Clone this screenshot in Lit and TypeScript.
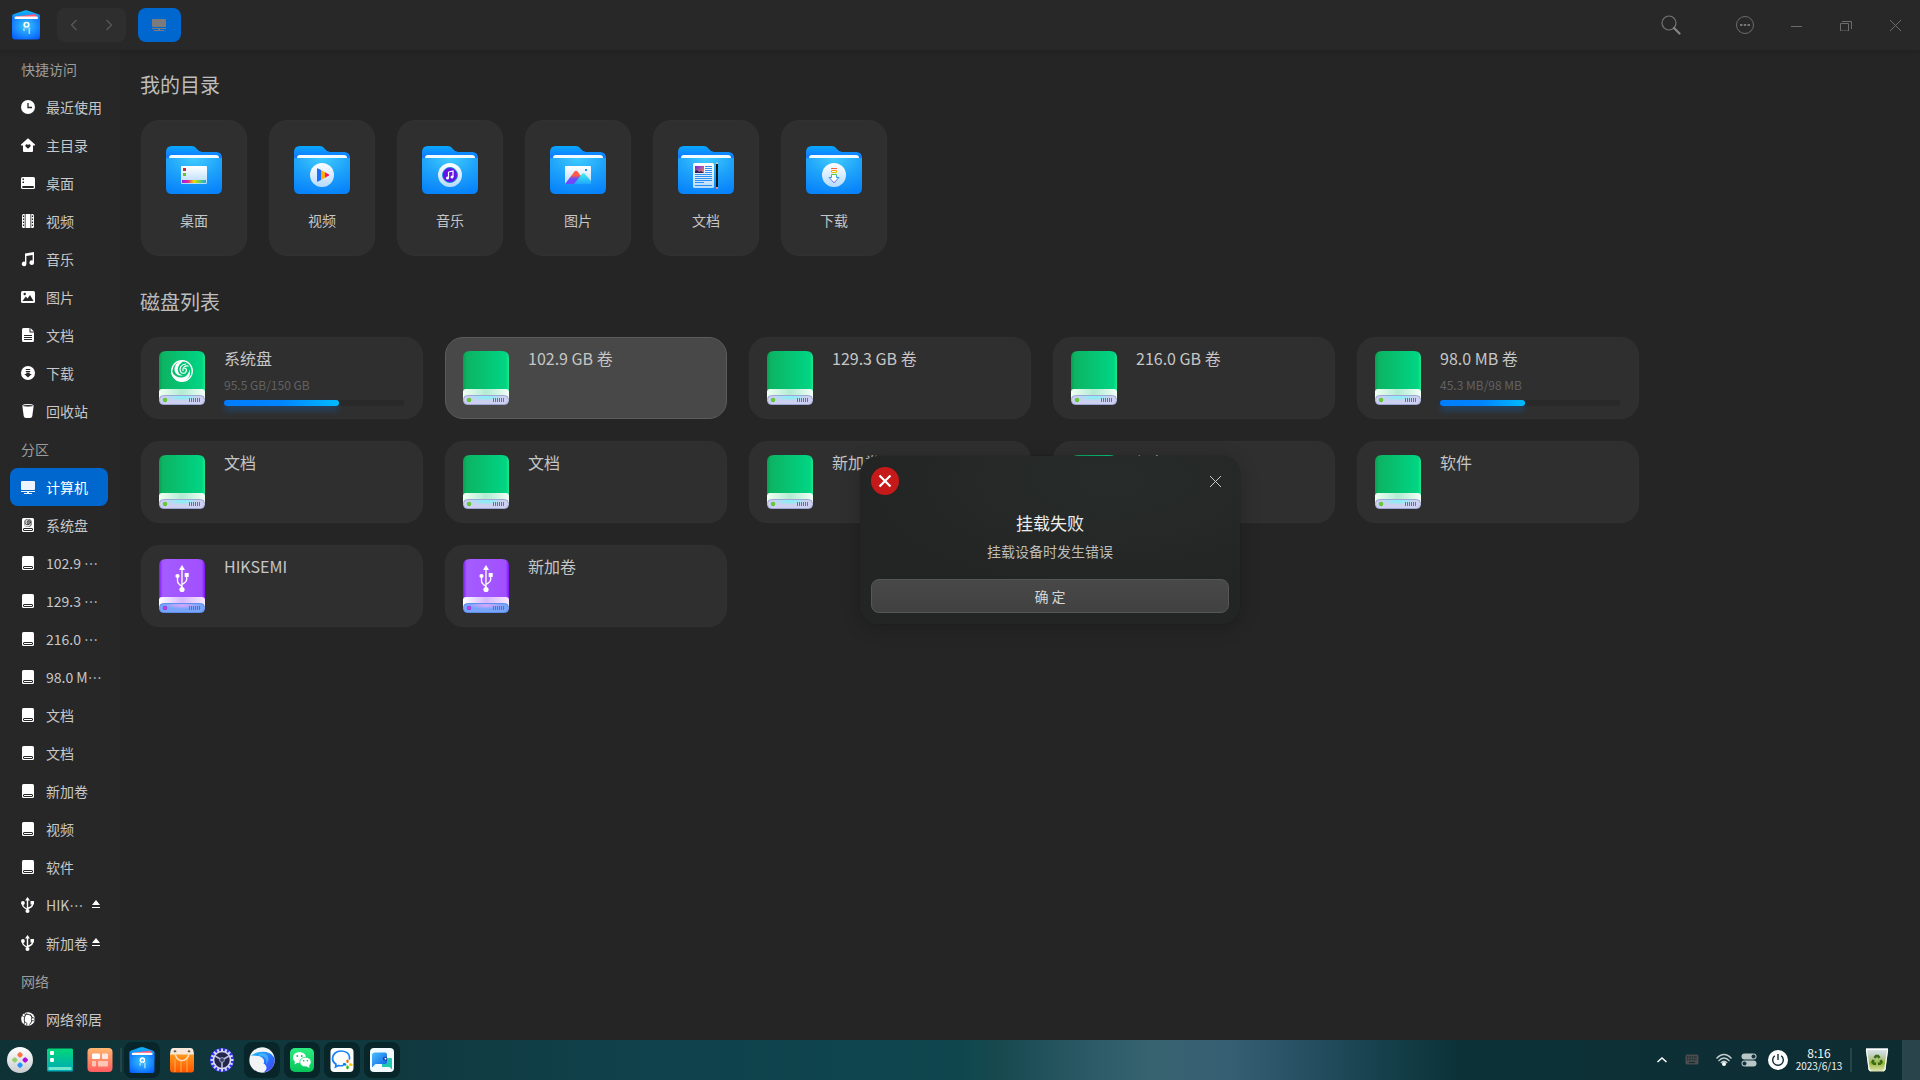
import { LitElement, html, css, svg, nothing } from "lit";
import type { SVGTemplateResult } from "lit";
import { customElement, property } from "lit/decorators.js";
import { classMap } from "lit/directives/class-map.js";
import { styleMap } from "lit/directives/style-map.js";

const fonts = css`"Noto Sans CJK SC", "Noto Sans", sans-serif`;

const resetButton = css`
  button {
    font: inherit;
    color: inherit;
    background: none;
    border: 0;
    padding: 0;
    margin: 0;
    display: flex;
    align-items: center;
    justify-content: center;
  }
  svg {
    display: block;
    flex: none;
  }
`;

/* ---------- shared drawings ---------- */

const swirl = svg`
  <circle r="10.3" fill="none" stroke="currentColor" stroke-width="1.300"/>
  <path fill="currentColor" d="M-10.800 .5C-8 4.500 -4 7 0 6.500C4 6 7 3 7.500 -1.500C9.500 4 6 9.500 0 10.500C-6 10.800 -10.500 6 -10.800 .5Z"/>
  <path fill="currentColor" d="M3 -10.500C-2 -8.500 -5 -4 -4 0C-3.500 2.500 -2 4 1 4.200C-3 5.500 -7 3 -7.500 -1C-8 -6 -4 -10.800 3 -10.500Z"/>
  <path fill="none" stroke="currentColor" stroke-width="1.200" stroke-linecap="round" d="M3.500 -7C-1 -6.500 -3 -2.500 -1.500 .5C-.5 2.500 2.500 3 4 .8M6 -5C2.500 -5.500 .3 -3 1 -.5M4 .8C5 -1 4 -2.800 2.800 -2.500"/>`;

const fileManager = (id: string) => svg`
  <defs>
    <linearGradient id="${id}a" x1="0" y1="0" x2="0" y2="1">
      <stop offset="0" stop-color="#12b8ff"/><stop offset="1" stop-color="#0562e8"/>
    </linearGradient>
    <radialGradient id="${id}b" cx=".5" cy=".42" r=".72">
      <stop offset="0" stop-color="#36c8ff"/><stop offset=".55" stop-color="#1a8cff"/><stop offset="1" stop-color="#0458ff"/>
    </radialGradient>
  </defs>
  <path d="M0 6Q0 4.500 2 4L12.500 .4Q14 -.1 15.500 .4L26 4Q28 4.500 28 6V14H0Z" fill="url(#${id}a)"/>
  <path d="M4 6.500L22 4.200Q24 4 24.500 5.500V9H3Z" fill="#ff5a7d"/>
  <path d="M2.500 8Q2.500 6.600 4 6.600H24.500Q26 6.600 26 8V11H2.500Z" fill="#fff"/>
  <path d="M0 6Q1.500 9 3 9H25Q27 9 28 6V26.500Q28 29.500 25 29.500H3Q0 29.500 0 26.500Z" fill="url(#${id}b)"/>
  <circle cx="14.500" cy="14.800" r="2.300" fill="none" stroke="#fff" stroke-width="1.700"/>
  <path d="M12 18V21M17.300 17.500V24" stroke="#a6dcff" stroke-width="1.600"/>
  <path d="M14.500 17.500V20" stroke="#5db9ff" stroke-width="1.200"/>`;

const usbGlyph = svg`
  <path d="M23 9V30M18.500 18V22Q18.500 24.500 23 27.500M27.700 17V20.500Q27.500 23 23 25.500" fill="none" stroke="#fff" stroke-width="1.300"/>
  <path d="M23 6L26 11H20Z" fill="#fff"/>
  <circle cx="18.500" cy="17" r="2.100" fill="#fff"/>
  <rect x="25.700" y="14" width="4" height="4" fill="#fff"/>
  <circle cx="23" cy="30.500" r="2.600" fill="#fff"/>`;

/* ---------- sidebar glyphs, 14 x 14 ---------- */

const driveGlyph = svg`
  <rect x="1" width="12" height="14" rx="1.500" fill="#fff"/>
  <rect x="2.500" y="10.500" width="9" height="2" rx=".5" fill="#fff" stroke="#262626"/>`;

const glyphs: Record<string, SVGTemplateResult> = {
  recent: svg`<circle cx="7" cy="7" r="7" fill="#fff"/><path d="M7 3V7.500H11" fill="none" stroke="#262626" stroke-width="1.300"/>`,
  home: svg`<path fill="#fff" d="M7 .2L14 6.600V7.500H12V13Q12 14 11 14H3Q2 14 2 13V7.500H0V6.600Z"/><path fill="#262626" d="M7 10.800L4.600 8.400C3.600 7 5.700 5.300 7 7C8.300 5.300 10.400 7 9.400 8.400Z"/>`,
  desktop: svg`<rect y="1" width="14" height="12" rx="1.500" fill="#fff"/><rect x="1.300" y="10" width="11.400" height="2" fill="#262626"/><rect x="1.500" y="2.500" width="1.500" height="1.500" fill="#262626"/><rect x="1.500" y="5.500" width="1.500" height="1.500" fill="#262626"/>`,
  video: svg`<rect x="1" y="0" width="12" height="14" rx="1.500" fill="#fff"/><path d="M2.500 1.500V13M11.500 1.500V13" stroke="#262626" stroke-width="1.200" stroke-dasharray="1.500 1.500"/><path d="M4.200 0V14M9.800 0V14" stroke="#262626" stroke-width=".8"/>`,
  music: svg`<path fill="#fff" fill-rule="evenodd" d="M4 1.500L13 0V10.500A2.300 2.300 0 1 1 11.600 8.600V3L5.400 4V12A2.300 2.300 0 1 1 4 9.800Z"/>`,
  image: svg`<rect y="1" width="14" height="12" rx="1.500" fill="#fff"/><path fill="#262626" d="M1.500 11L4.800 6.500L6.500 8.500L9 5L12.500 11Z"/><circle cx="3.700" cy="4" r="1.200" fill="#262626"/>`,
  doc: svg`<path fill="#fff" d="M2.500 0H8.500V4.500H13V12.500Q13 14 11.500 14H2.500Q1 14 1 12.500V1.500Q1 0 2.500 0ZM9.500 0L13 3.500H9.500Z"/><path d="M3 7.500H11M3 9.500H11M3 11.500H11" stroke="#262626"/>`,
  download: svg`<circle cx="7" cy="7" r="7" fill="#fff"/><path d="M4.800 3.500H9.200M4.800 5.500H9.200" stroke="#262626" stroke-width="1.100"/><path fill="#262626" d="M5.300 6.500H8.700V8H10.800L7 11.500L3.200 8H5.300Z"/>`,
  trash: svg`<path fill="#fff" d="M1.400 2.500L2.700 12Q3 14 5 14H9Q11 14 11.300 12L12.600 2.500Z"/><ellipse cx="7" cy="1.800" rx="5.500" ry="1.300" fill="#262626" stroke="#fff" stroke-width="1"/>`,
  computer: svg`<rect y="1" width="14" height="9" rx="1" fill="#eef4ff"/><path d="M0 11.500H14M3 13.500H11" stroke="#eef4ff"/><path d="M6 12H8V13.500H6Z" fill="#eef4ff"/>`,
  system: svg`${driveGlyph}<circle cx="7" cy="5" r="3.900" fill="#262626"/><g transform="translate(7 5) scale(.34)" color="#fff">${swirl}</g>`,
  drive: driveGlyph,
  usb: svg`<path d="M6.500 2V13M1.800 5.500V7.500Q2 9 6.500 11.500M11.400 5V7Q11 9 6.500 10.500" fill="none" stroke="#fff" stroke-width="1.400"/><path fill="#fff" d="M6.500 -1L9 2.500H4ZM9.500 3H13V6.500H9.500Z"/><circle cx="1.900" cy="5" r="1.900" fill="#fff"/><circle cx="6.500" cy="13" r="2" fill="#fff"/>`,
  network: svg`<circle cx="7" cy="7" r="6.800" fill="#fff"/><path d="M3 3C6.500 1 11 3 12 7M5.500 1.500C2.500 5 2.800 9.500 5 12.500M9.500 2.500C12 6 11 10 8.500 12.500" fill="none" stroke="#262626" stroke-width="1"/><circle cx="2.800" cy="3" r="1.600" fill="#fff" stroke="#262626" stroke-width=".7"/><circle cx="12" cy="7.300" r="1.600" fill="#fff" stroke="#262626" stroke-width=".7"/><circle cx="4.500" cy="12" r="1.500" fill="#fff" stroke="#262626" stroke-width=".7"/>`,
};

interface Place {
  label: string;
  icon?: string;
  active?: boolean;
  eject?: boolean;
}

const places: Place[] = [
  { label: "快捷访问" },
  { label: "最近使用", icon: "recent" },
  { label: "主目录", icon: "home" },
  { label: "桌面", icon: "desktop" },
  { label: "视频", icon: "video" },
  { label: "音乐", icon: "music" },
  { label: "图片", icon: "image" },
  { label: "文档", icon: "doc" },
  { label: "下载", icon: "download" },
  { label: "回收站", icon: "trash" },
  { label: "分区" },
  { label: "计算机", icon: "computer", active: true },
  { label: "系统盘", icon: "system" },
  { label: "102.9 GB 卷", icon: "drive" },
  { label: "129.3 GB 卷", icon: "drive" },
  { label: "216.0 GB 卷", icon: "drive" },
  { label: "98.0 MB 卷", icon: "drive" },
  { label: "文档", icon: "drive" },
  { label: "文档", icon: "drive" },
  { label: "新加卷", icon: "drive" },
  { label: "视频", icon: "drive" },
  { label: "软件", icon: "drive" },
  { label: "HIKSEMI", icon: "usb", eject: true },
  { label: "新加卷", icon: "usb", eject: true },
  { label: "网络" },
  { label: "网络邻居", icon: "network" },
];

@customElement("fm-sidebar")
export class FmSidebar extends LitElement {
  static styles = [
    resetButton,
    css`
      :host {
        display: block;
        background: #272727;
        padding: 0 12px 0 10px;
        font: 14px/38px ${fonts};
        color: #c8c8c8;
      }
      .group,
      .row {
        height: 38px;
      }
      .group {
        margin: 0;
        padding-left: 11px;
        font-size: 14px;
        font-weight: 400;
        color: #9d9d9d;
      }
      .row {
        display: flex;
        align-items: center;
        padding: 0 5px 0 11px;
        border-radius: 8px;
      }
      .row.active {
        background: #0067cf;
        color: #fff;
      }
      .link {
        display: flex;
        align-items: center;
        gap: 11px;
        flex: 1;
        min-width: 0;
        color: inherit;
        text-decoration: none;
      }
      .label {
        flex: 1;
        min-width: 0;
        overflow: hidden;
        white-space: nowrap;
        text-overflow: ellipsis;
      }
      .glyph {
        overflow: visible;
      }
      .eject {
        width: 11px;
        margin-left: 3px;
        justify-content: flex-start;
      }
    `,
  ];

  render() {
    return html`<nav aria-label="位置">
      ${places.map((p) =>
        p.icon
          ? html`<div class=${classMap({ row: true, active: !!p.active })}>
              <a class="link" href="#">
                <svg class="glyph" width="14" height="14" viewBox="0 0 14 14">${glyphs[p.icon]}</svg>
                <span class="label">${p.label}</span>
              </a>
              ${p.eject
                ? html`<button class="eject" aria-label="弹出">
                    <svg width="8" height="12" viewBox="0 0 8 12"><path d="M4 1L8 6H0ZM0 8H8V9H0Z" fill="#fff" /></svg>
                  </button>`
                : nothing}
            </div>`
          : html`<h2 class="group">${p.label}</h2>`
      )}
    </nav>`;
  }
}

/* ---------- home folders ---------- */

const emblems: Record<string, SVGTemplateResult> = {
  desktop: svg`
    <linearGradient id="rainbow"><stop offset="0" stop-color="#9b1df0"/><stop offset=".25" stop-color="#e02a8a"/><stop offset=".5" stop-color="#f5d800"/><stop offset=".75" stop-color="#5fd35f"/><stop offset="1" stop-color="#18a8f5"/></linearGradient>
    <rect x="15" y="20" width="26" height="18" rx="1" fill="url(#sheet)"/>
    <rect x="16" y="34" width="24" height="3" fill="url(#rainbow)"/>
    <rect x="17" y="22" width="3" height="3" fill="#d32836"/><rect x="17" y="27" width="3" height="3" fill="#6fbf2c"/>`,
  video: svg`<circle cx="28" cy="29" r="12" fill="url(#sheet)"/>
    <path d="M23 23Q23 22 24 22.400L27 24V34L24 35.600Q23 36 23 35Z" fill="#1a6dff"/><path d="M27 24L31 26.300V31.700L27 34Z" fill="#ffae00"/><path d="M31 26.300L35 28.500Q35.600 29 35 29.500L31 31.700Z" fill="#ff1464"/>`,
  music: svg`<circle cx="28" cy="29" r="12" fill="url(#sheet)"/><circle cx="28" cy="29" r="7.500" fill="#6312e8" stroke="#1590d0" stroke-width="1"/>
    <path d="M26.500 26L31 25V31M26.500 26V32.200" fill="none" stroke="#fff" stroke-width="1.200"/><circle cx="25.500" cy="32" r="1.500" fill="#fff"/><circle cx="30" cy="31" r="1.500" fill="#fff"/>`,
  image: svg`
    <linearGradient id="hill1" x1="0" y1="0" x2="0" y2="1"><stop offset=".35" stop-color="#ff5b45"/><stop offset=".6" stop-color="#6c4bff"/></linearGradient>
    <linearGradient id="hill2" x1="0" y1="0" x2="0" y2="1"><stop offset="0" stop-color="#40f0f0"/><stop offset="1" stop-color="#20a8ff"/></linearGradient>
    <rect x="15" y="20" width="26" height="18" rx="1" fill="url(#sheet)"/>
    <path d="M15 38L24.500 25.500Q26 24 27.500 25.500L37 38Z" fill="url(#hill1)"/><path d="M24 38L32 28Q33.500 26.500 35 28L41 35V38Z" fill="url(#hill2)"/><rect x="35" y="23" width="2" height="2" fill="#2a8cf0"/>`,
  doc: svg`
    <linearGradient id="photo" x1="0" y1="0" x2="1" y2="1"><stop offset="0" stop-color="#6228e8"/><stop offset="1" stop-color="#ff8a50"/></linearGradient>
    <rect x="15" y="17" width="21" height="25" rx="1.500" fill="url(#sheet)"/><rect x="17" y="20" width="9" height="7" fill="url(#photo)"/><path d="M17 27V25L19 24L21 26L23 25L26 27Z" fill="#2a2250"/>
    <path d="M27 20.500H34M27 22.500H34M27 24.500H34M27 26.500H34M17 28.500H34M17 30.500H34M17 32.500H34M17 34.500H34M17 36.500H26M17 39.500H34" stroke="#1b86f0" stroke-width=".9"/>
    <path d="M38 18H40V41H38Z" fill="#151515"/><path d="M38 18L39 15.500L40 18Z" fill="#e8c9a0"/><path d="M38 41H40V42.500Q39 43.500 38 42.500Z" fill="#f08a8a"/>`,
  download: svg`
    <linearGradient id="arrow" gradientUnits="userSpaceOnUse" x1="0" y1="22" x2="0" y2="38"><stop offset="0" stop-color="#ff4f42"/><stop offset=".25" stop-color="#f5c800"/><stop offset=".4" stop-color="#62cf3f"/><stop offset=".55" stop-color="#1da6f0"/><stop offset="1" stop-color="#9a3cf0"/></linearGradient>
    <circle cx="28" cy="29" r="12" fill="url(#sheet)"/><path d="M25 22.500H31M25.500 24.500H30.500V26.500H25.500ZM25.500 28.500H30.500V31.500H33L28 36.800L23 31.500H25.500Z" fill="#fff" stroke="url(#arrow)" stroke-width="1"/>`,
};

const folders = [
  ["桌面", "desktop"],
  ["视频", "video"],
  ["音乐", "music"],
  ["图片", "image"],
  ["文档", "doc"],
  ["下载", "download"],
];

@customElement("fm-folder")
export class FmFolder extends LitElement {
  @property() label = "";
  @property() emblem = "desktop";

  static styles = [
    resetButton,
    css`
      :host {
        display: block;
        font: 14px/20px ${fonts};
        color: #c6c6c6;
      }
      .tile {
        flex-direction: column;
        justify-content: flex-start;
        gap: 16px;
        width: 106px;
        height: 136px;
        padding: 25px 0 0;
        box-sizing: border-box;
        border-radius: 18px;
        background: #2f2f2f;
        border: 1px solid #313131;
      }
    `,
  ];

  render() {
    return html`<button class="tile">
      <svg width="56" height="48" viewBox="0 0 56 48">
        <defs>
          <linearGradient id="back" x1="0" y1="0" x2="0" y2="1"><stop offset="0" stop-color="#08a8ff" /><stop offset=".5" stop-color="#1276ff" /></linearGradient>
          <radialGradient id="front" cx=".5" cy="0" r="1"><stop offset="0" stop-color="#40ccff" /><stop offset=".5" stop-color="#1fa2fa" /><stop offset="1" stop-color="#0784fb" /></radialGradient>
          <linearGradient id="sheet" x1="0" y1="0" x2="0" y2="1"><stop offset="0" stop-color="#fff" /><stop offset="1" stop-color="#b4dbfb" /></linearGradient>
        </defs>
        <path d="M0 6Q0 0 6 0H26Q29 0 31 3Q33 6 36 6H50Q56 6 56 12V24H0Z" fill="url(#back)" />
        <path d="M3 13V12Q3 9 6 9H50Q53 9 53 12V13Z" fill="#f2fbff" />
        <path d="M0 12H56V42Q56 48 50 48H6Q0 48 0 42Z" fill="url(#front)" />
        ${emblems[this.emblem]}
      </svg>
      <span>${this.label}</span>
    </button>`;
  }
}

/* ---------- disks ---------- */

interface Disk {
  name: string;
  usage?: string;
  percent?: number;
  system?: boolean;
  usb?: boolean;
  hover?: boolean;
}

const disks: Disk[] = [
  { name: "系统盘", usage: "95.5 GB/150 GB", percent: 64, system: true },
  { name: "102.9 GB 卷", hover: true },
  { name: "129.3 GB 卷" },
  { name: "216.0 GB 卷" },
  { name: "98.0 MB 卷", usage: "45.3 MB/98 MB", percent: 47 },
  { name: "文档" },
  { name: "文档" },
  { name: "新加卷" },
  { name: "视频" },
  { name: "软件" },
  { name: "HIKSEMI", usb: true },
  { name: "新加卷", usb: true },
];

@customElement("fm-disk")
export class FmDisk extends LitElement {
  @property({ attribute: false }) disk: Disk = { name: "" };

  static styles = [
    resetButton,
    css`
      :host {
        display: block;
        font: 16px/24px ${fonts};
        color: #c6c6c6;
      }
      .card {
        width: 100%;
        height: 82px;
        justify-content: flex-start;
        align-items: flex-start;
        gap: 19px;
        padding: 8px 17px 0;
        box-sizing: border-box;
        border-radius: 18px;
        background: #2f2f2f;
        border: 1px solid #313131;
        text-align: left;
      }
      .card.hover {
        background: #484848;
        border-color: #5c5c5c;
      }
      .art {
        margin-top: 5px;
      }
      .info {
        display: flex;
        flex-direction: column;
        width: 180px;
      }
      .usage {
        font-size: 12px;
        line-height: 18px;
        margin-top: 6px;
        color: #626262;
      }
      .bar {
        height: 6px;
        margin-top: 6px;
        border-radius: 3px;
        background: #292929;
      }
      .fill {
        display: block;
        height: 6px;
        border-radius: 3px;
        background: linear-gradient(90deg, #007dff 0, #0085ff 50%, #00bcff 100%);
        box-shadow: 0 4px 6px rgba(0, 129, 255, 0.3);
      }
    `,
  ];

  private art() {
    const usb = !!this.disk.usb;
    const shell = usb ? ["#7a1af0", "#a45cff", "#a250ff", "#7d14f5"] : ["#0a9c55", "#0cb462", "#00d584", "#20e88c"];
    const strip = usb ? ["#fff", "#d9b8ff", "#f7e8ff"] : ["#f0fff5", "#b2ecd2", "#f0fff5"];
    const base = usb ? ["#dca8fb", "#7aa4fa"] : ["#7ff4fa", "#cdd0ee"];
    return html`<svg class="art" width="46" height="54" viewBox="0 0 46 54">
      <defs>
        <linearGradient id="shell"
          ><stop offset="0" stop-color=${shell[0]} /><stop offset=".08" stop-color=${shell[1]} /><stop offset=".93" stop-color=${shell[2]} /><stop offset="1" stop-color=${shell[3]}
        /></linearGradient>
        <linearGradient id="strip"><stop offset="0" stop-color=${strip[0]} /><stop offset=".5" stop-color=${strip[1]} /><stop offset="1" stop-color=${strip[2]} /></linearGradient>
        <radialGradient id="base" cx=".5" cy=".2" r=".5"><stop offset="0" stop-color=${base[0]} /><stop offset=".8" stop-color=${base[1]} /></radialGradient>
      </defs>
      <path d="M0 7Q0 0 7 0H39Q46 0 46 7V42H0Z" fill="url(#shell)" />
      <path d="M0 41Q0 38 3 38H43Q46 38 46 41V50H0Z" fill="url(#strip)" />
      <rect x=".5" y="44.500" width="45" height="9" rx="4" fill="url(#base)" stroke=${usb ? "#5c8fee" : "#9fa6d8"} />
      <circle cx="6" cy="49" r="1.800" fill=${usb ? "#e832e0" : "#5cdd12"} stroke=${usb ? "#7020c8" : "#43a512"} stroke-width=".6" />
      <path d="M30.500 47V51M32.500 47V51M34.500 47V51M36.500 47V51M38.500 47V51M40.500 47V51" stroke="#168cf0" />
      ${usb ? usbGlyph : nothing} ${this.disk.system ? svg`<g transform="translate(23 20)" color="#fff">${swirl}</g>` : nothing}
    </svg>`;
  }

  render() {
    const d = this.disk;
    return html`<button class=${classMap({ card: true, hover: !!d.hover })}>
      ${this.art()}
      <span class="info">
        <span>${d.name}</span>
        ${d.usage
          ? html`<span class="usage">${d.usage}</span>
              <span class="bar"><span class="fill" style=${styleMap({ width: `${d.percent}%` })}></span></span>`
          : nothing}
      </span>
    </button>`;
  }
}

/* ---------- error dialog ---------- */

@customElement("fm-error-dialog")
export class FmErrorDialog extends LitElement {
  static styles = [
    resetButton,
    css`
      :host {
        display: block;
        width: 380px;
        padding: 11px;
        box-sizing: border-box;
        border-radius: 18px;
        background: radial-gradient(240px 110px at 66% 14%, #272c2a, #232524);
        box-shadow: 0 4px 20px rgba(0, 0, 0, 0.2), 0 0 1px #1a1a1a;
        font: 14px/22px ${fonts};
        color: #bdbdbd;
        text-align: center;
      }
      .top {
        display: flex;
        justify-content: space-between;
        align-items: center;
      }
      .close {
        width: 27px;
        height: 27px;
      }
      .title {
        margin: 14px 0 0;
        font-size: 17px;
        line-height: 28px;
        font-weight: 400;
        color: #ececec;
      }
      .message {
        margin: 3px 0 17px;
      }
      .ok {
        width: 100%;
        height: 34px;
        box-sizing: border-box;
        border: 1px solid #565656;
        border-radius: 8px;
        background: linear-gradient(#484848, #414141);
        color: #d4d4d4;
      }
    `,
  ];

  render() {
    return html`<section role="alertdialog" aria-labelledby="title" aria-describedby="message">
      <div class="top">
        <svg width="28" height="28" viewBox="0 0 28 28">
          <circle cx="14" cy="14" r="14" fill="#c61a1a" />
          <path d="M8.500 8.500L19.500 19.500M19.500 8.500L8.500 19.500" stroke="#fff" stroke-width="2.200" />
        </svg>
        <button class="close" aria-label="关闭">
          <svg width="11" height="11" viewBox="0 0 11 11"><path d="M0 0L11 11M11 0L0 11" stroke="#c8c8c8" /></svg>
        </button>
      </div>
      <h1 class="title" id="title">挂载失败</h1>
      <p class="message" id="message">挂载设备时发生错误</p>
      <button class="ok">确 定</button>
    </section>`;
  }
}

/* ---------- taskbar ---------- */

interface DockApp {
  name: string;
  open?: boolean;
  art: SVGTemplateResult;
}

const petal = (x: number, y: number, c: string) =>
  svg`<rect x=${x - 2.3} y=${y - 2.3} width="4.600" height="4.600" rx="1.300" fill=${c} transform="rotate(45 ${x} ${y})"/>`;

const gearTeeth = Array.from({ length: 16 }, (_, i) => svg`<rect x="12" y="1.500" width="2" height="4" fill="#d5d8ee" transform="rotate(${i * 22.5} 13 13)"/>`);

const tools: DockApp[] = [
  {
    name: "启动器",
    art: svg`<defs><linearGradient id="lg" x1="0" y1="0" x2="0" y2="1"><stop offset="0" stop-color="#fff"/><stop offset="1" stop-color="#c9cdcf"/></linearGradient></defs>
      <circle cx="13" cy="13" r="13" fill="url(#lg)"/>${petal(13, 7.8, "#ff7040")}${petal(7.8, 13, "#98cf6c")}${petal(18.2, 13, "#b40ae0")}${petal(13, 18.2, "#2490ff")}`,
  },
  {
    name: "桌面",
    art: svg`<defs><linearGradient id="sd" x1="0" y1="0" x2="0" y2="1"><stop offset="0" stop-color="#00d878"/><stop offset="1" stop-color="#00a8b8"/></linearGradient></defs>
      <rect y="1.500" width="26" height="23" rx="1.500" fill="url(#sd)"/><rect x="3" y="4" width="4" height="4" rx="1" fill="#fff"/><rect x="3" y="11" width="4" height="4" rx="1" fill="#fff"/><rect x="1.500" y="20" width="23" height="3" fill="#6ee6cc"/>`,
  },
  {
    name: "多任务视图",
    art: svg`<defs><linearGradient id="mt" x1="0" y1="0" x2="0" y2="1"><stop offset="0" stop-color="#ffb870"/><stop offset="1" stop-color="#ff5c60"/></linearGradient></defs>
      <rect x=".5" y="1" width="25" height="24" rx="4" fill="url(#mt)"/><rect x="5" y="6.500" width="8" height="5.500" rx="1" fill="#fff"/><rect x="15" y="6.500" width="6" height="5.500" rx="1" fill="#ffe9e0"/><rect x="5" y="14" width="4" height="5.500" rx="1" fill="#ffc6b8"/><rect x="11" y="14" width="10" height="5.500" rx="1" fill="#ffc6b8"/>`,
  },
];

const apps: DockApp[] = [
  { name: "文件管理器", open: true, art: svg`<g transform="translate(.5 0) scale(.89)">${fileManager("t")}</g>` },
  {
    name: "应用商店",
    art: svg`<defs><linearGradient id="st" x1="0" y1="0" x2="0" y2="1"><stop offset="0" stop-color="#ff9a1e"/><stop offset="1" stop-color="#ff5500"/></linearGradient></defs>
      <path d="M1 7H25V22.500Q25 25.500 22 25.500H4Q1 25.500 1 22.500Z" fill="url(#st)"/><path d="M6 12V25M12 14V25M18 12V25" stroke="#ffae50" stroke-width="2" opacity=".5"/>
      <path d="M1.500 4Q2 1 4.500 1H21.500Q24 1 24.500 4L25 7.500H1Z" fill="#f8e8da"/><circle cx="6" cy="4.500" r="1.300" fill="#6b5c54"/><circle cx="20" cy="4.500" r="1.300" fill="#6b5c54"/>
      <path d="M6 5C6 16.500 20 16.500 20 5" fill="none" stroke="#ffe2c4" stroke-width="1.400"/>`,
  },
  {
    name: "控制中心",
    art: svg`<circle cx="13" cy="13" r="12" fill="#3232f0"/>${gearTeeth}<circle cx="13" cy="13" r="8.500" fill="#23264a" stroke="#d5d8ee" stroke-width="1.600"/><path d="M13 13V21M13 13L6 9M13 13L20 9" stroke="#b9bdd8" stroke-width="1.600"/><circle cx="13" cy="13" r="2.400" fill="#3a3d62" stroke="#b9bdd8" stroke-width=".8"/>`,
  },
  {
    name: "浏览器",
    open: true,
    art: svg`<defs><linearGradient id="br" x1="0" y1="0" x2="1" y2="1"><stop offset="0" stop-color="#18c4f5"/><stop offset=".6" stop-color="#2a6cff"/><stop offset="1" stop-color="#5a3cf0"/></linearGradient></defs>
      <circle cx="13" cy="13" r="12.700" fill="#f2f3f5"/><path d="M1.500 8.500C6 5.500 14 3.500 20 6C23 7 25 10 25.600 12C26 18 23 24 14.500 25.600C19 22 18 18.500 14.500 16.500C16.500 13 13 9 8.500 9C5.500 8.700 3 9 1.500 8.500Z" fill="url(#br)"/><path d="M9 8.500C15 8 18.500 12 17 17C21 14 20 8 15.500 6.500C12 5.500 10 7 9 8.500Z" fill="#7fdcff" opacity=".4"/>`,
  },
  {
    name: "微信",
    open: true,
    art: svg`<defs><linearGradient id="wx" x1="0" y1="0" x2="0" y2="1"><stop offset="0" stop-color="#2cec80"/><stop offset="1" stop-color="#06c458"/></linearGradient></defs>
      <rect x="1" y="1" width="24" height="24" rx="5" fill="url(#wx)"/><ellipse cx="10.500" cy="10.500" rx="6.500" ry="5.500" fill="#fff"/><path d="M6 14L5.500 17.500L9 15.500Z" fill="#fff"/><ellipse cx="16.500" cy="15" rx="5.700" ry="4.800" fill="#fff" stroke="#18d56a" stroke-width=".8"/><path d="M17 19L20.500 21L20 18Z" fill="#fff"/>
      <circle cx="8.300" cy="9" r=".9" fill="#12b858"/><circle cx="12.700" cy="9" r=".9" fill="#12b858"/><circle cx="14.700" cy="13.800" r=".8" fill="#12b858"/><circle cx="18.400" cy="13.800" r=".8" fill="#12b858"/>`,
  },
  {
    name: "企业微信",
    open: true,
    art: svg`<rect x="1.500" y="1" width="23" height="24" rx="4" fill="#fff"/><path d="M20.500 12C21 5 15 4 12 4C7 4 3.500 7.500 3.500 11.500C3.500 14 5 16 7 17.200L6.500 20L9.500 18.500Q12.500 19 14 18.500" fill="none" stroke="#1b82f5" stroke-width="1.700" stroke-linecap="round"/>
      <path d="M18.500 15V13.500" stroke="#fb6500" stroke-width="2.200" stroke-linecap="round"/><path d="M21 17.500L22.500 17.700" stroke="#ffcc00" stroke-width="2.400" stroke-linecap="round"/><path d="M18.500 19.800V21" stroke="#2dbc00" stroke-width="2.400" stroke-linecap="round"/><path d="M16.200 17.500L15 17.200" stroke="#0082ef" stroke-width="2.400" stroke-linecap="round"/>`,
  },
  {
    name: "远程协助",
    open: true,
    art: svg`<defs><linearGradient id="rc" x1="0" y1="0" x2="1" y2="1"><stop offset="0" stop-color="#48c0ff"/><stop offset="1" stop-color="#0a5ae0"/></linearGradient></defs>
      <rect x="1" y="1" width="24" height="24" rx="4" fill="#f2fbff"/><path d="M13 11H22Q23 11 23 12V22.500L20.500 20H13Z" fill="#20c8b0"/><path d="M6 5.500H16Q18 5.500 18 7.500V15Q18 17 16 17H6.500L3 20.500V8.500Q3 5.500 6 5.500Z" fill="url(#rc)"/><path d="M14 10.500L18 9.500V14L14 13Z" fill="#1340a8"/><circle cx="16.500" cy="11.700" r=".9" fill="#fff"/>`,
  },
];

@customElement("desk-taskbar")
export class DeskTaskbar extends LitElement {
  static styles = [
    resetButton,
    css`
      :host {
        display: flex;
        align-items: stretch;
        height: 40px;
        background: linear-gradient(90deg, #0e3236 0, #10393f 21%, #10424c 33%, #0e464e 50%, #17494f 52%, #2d5b68 57%, #376370 60%, #375f74 64%, #274f62 68%, #15404b 72%, #0c3238 76%, #0d2c32 100%);
        font: 12px/14px ${fonts};
        color: #f0f4f4;
      }
      .slot {
        width: 40px;
        height: 40px;
      }
      .tile {
        display: flex;
        align-items: center;
        justify-content: center;
        width: 36px;
        height: 36px;
        border-radius: 8px;
      }
      .tile.open {
        background: #08262a;
      }
      .rule {
        width: 2px;
        height: 24px;
        align-self: center;
        background: #24464b;
      }
      .space {
        flex: 1;
      }
      .tray {
        display: flex;
        align-items: center;
      }
      .tray button {
        height: 40px;
      }
      .more {
        width: 26px;
      }
      .keyboard {
        width: 34px;
      }
      .net {
        width: 30px;
      }
      .switches {
        width: 20px;
      }
      .power {
        width: 38px;
      }
      .tray .clock {
        flex-direction: column;
        width: 44px;
        padding-bottom: 2px;
        box-sizing: border-box;
        white-space: nowrap;
      }
      .date {
        font-size: 10px;
        line-height: 12px;
      }
      .tray .rule {
        margin-left: 9px;
      }
      .bin {
        width: 50px;
      }
      .peek {
        width: 18px;
        background: #29444a;
      }
    `,
  ];

  private slotFor(a: DockApp) {
    return html`<button class="slot" aria-label=${a.name}>
      <span class=${classMap({ tile: true, open: !!a.open })}><svg width="26" height="26" viewBox="0 0 26 26">${a.art}</svg></span>
    </button>`;
  }

  render() {
    return html`
      ${tools.map((a) => this.slotFor(a))}
      <span class="rule"></span>
      ${apps.map((a) => this.slotFor(a))}
      <span class="space"></span>
      <div class="tray">
        <button class="more" aria-label="展开托盘">
          <svg width="12" height="8" viewBox="0 0 12 8"><path d="M1.500 6L6 2L10.500 6" fill="none" stroke="#fff" stroke-width="1.500" /></svg>
        </button>
        <button class="keyboard" aria-label="输入法">
          <svg width="14" height="12" viewBox="0 0 14 12">
            <rect x=".5" y=".5" width="13" height="10" rx="1.500" fill="#4b4d4e" />
            <path d="M2 3H12M2 5.500H12" stroke="#1b2b2f" stroke-width="1.400" stroke-dasharray="1.400 1" /><path d="M4 8.500H10" stroke="#1b2b2f" stroke-width="1.200" />
          </svg>
        </button>
        <button class="net" aria-label="无线网络">
          <svg width="16" height="14" viewBox="0 0 16 14">
            <path d="M.5 5.500Q8 -2.500 15.500 5.500M2.500 8Q8 2 13.500 8M4.800 10Q8 6.500 11.200 10" fill="none" stroke="#c3cfd1" stroke-width="1.300" /><circle cx="8" cy="11" r="2" fill="#fff" />
          </svg>
        </button>
        <button class="switches" aria-label="快捷面板">
          <svg width="16" height="14" viewBox="0 0 16 14">
            <rect x=".5" y=".5" width="15" height="6" rx="3" fill="#b9c6c8" /><circle cx="12.500" cy="3.500" r="2" fill="#12343a" />
            <rect x=".5" y="7.500" width="15" height="6" rx="3" fill="#b9c6c8" /><circle cx="3.500" cy="10.500" r="2" fill="#12343a" />
          </svg>
        </button>
        <button class="power" aria-label="电源">
          <svg width="20" height="20" viewBox="0 0 20 20">
            <circle cx="10" cy="10" r="10" fill="#fff" /><path d="M6.800 5.800A5.300 5.300 0 1 0 13.200 5.800M10 4V10" fill="none" stroke="#0e2e33" stroke-width="1.400" />
          </svg>
        </button>
        <button class="clock">
          <span>8:16</span>
          <span class="date">2023/6/13</span>
        </button>
        <span class="rule"></span>
        <button class="bin" aria-label="回收站">
          <svg width="24" height="24" viewBox="0 0 24 24">
            <defs
              ><linearGradient id="binfill" x1="0" y1="0" x2="0" y2="1"><stop offset="0" stop-color="#dfe7f2" /><stop offset=".3" stop-color="#c3d2c0" /><stop offset=".65" stop-color="#98b83c" /><stop offset="1" stop-color="#dfe6b8" /></linearGradient
            ></defs>
            <path d="M1 .5H23L20.500 21.500Q20 23.500 18 23.500H6Q4 23.500 3.500 21.500Z" fill="url(#binfill)" />
            <path d="M1 .5H23V2H1Z" fill="#fff" />
            <path d="M1.500 2L4.200 21.500L6 23M22.500 2L19.800 21.500L18 23" fill="none" stroke="#f6faf4" stroke-width="1.400" />
            <path d="M9.500 10L11 8H13L14.500 10M15.500 12L16.500 14L15 15.700H13M11 15.700H9L7.500 14L8.700 11.800" fill="none" stroke="#3c6a16" stroke-width="2.600" />
          </svg>
        </button>
        <button class="peek" aria-label="显示桌面"></button>
      </div>
    `;
  }
}

/* ---------- window ---------- */

@customElement("app-root")
export class AppRoot extends LitElement {
  static styles = [
    resetButton,
    css`
      :host {
        display: grid;
        grid-template-rows: 50px 1fr 40px;
        position: relative;
        min-height: 100vh;
        background: #252525;
        color: #bdbdbd;
        font: 14px/20px ${fonts};
      }
      .titlebar {
        display: flex;
        align-items: center;
        padding-left: 12px;
        background: #282828;
        box-shadow: 0 1px 6px rgba(0, 0, 0, 0.18);
        z-index: 1;
      }
      .history {
        display: flex;
        gap: 1px;
        margin: 0 12px 0 17px;
        background: #2e2e2e;
        border-radius: 8px;
      }
      .history button {
        width: 34px;
        height: 34px;
      }
      .tab {
        width: 43px;
        height: 34px;
        border-radius: 8px;
        background: #0067cf;
      }
      .space {
        flex: 1;
      }
      .tool {
        width: 50px;
        height: 50px;
      }
      .search {
        margin-right: 23px;
      }
      .menu {
        width: 52px;
      }
      .exit {
        width: 49px;
      }
      .body {
        display: grid;
        grid-template-columns: 120px 1fr;
        min-height: 0;
      }
      .main {
        padding: 20px 0 20px 20px;
      }
      .heading {
        margin: 0 0 20px;
        font-size: 20px;
        line-height: 30px;
        font-weight: 400;
      }
      .folders {
        display: flex;
        flex-wrap: wrap;
        gap: 22px;
        padding: 0 0 31px 1px;
      }
      .disks {
        display: grid;
        grid-template-columns: repeat(auto-fill, 282px);
        gap: 22px;
        padding-left: 1px;
      }
      .dialog {
        position: absolute;
        left: calc(50% + 90px);
        top: 50%;
        transform: translate(-50%, -50%);
        z-index: 2;
      }
    `,
  ];

  render() {
    return html`
      <header class="titlebar">
        <svg width="28" height="30" viewBox="0 0 28 30">${fileManager("f")}</svg>
        <div class="history">
          <button aria-label="后退">
            <svg width="8" height="12" viewBox="0 0 8 12"><path d="M6.500 1L1.500 6L6.500 11" fill="none" stroke="#5a5a5a" stroke-width="1.200" /></svg>
          </button>
          <button aria-label="前进">
            <svg width="8" height="12" viewBox="0 0 8 12"><path d="M1.500 1L6.500 6L1.500 11" fill="none" stroke="#5a5a5a" stroke-width="1.200" /></svg>
          </button>
        </div>
        <button class="tab" aria-label="计算机">
          <svg width="15" height="12" viewBox="0 0 15 12"><rect width="14" height="8" rx="1" fill="#7b7b7b" /><path d="M0 9.500H14M2 11.500H12" stroke="#7b7b7b" /><path d="M6 9V12H8V9Z" fill="#7b7b7b" /></svg>
        </button>
        <span class="space"></span>
        <button class="tool search" aria-label="搜索">
          <svg width="20" height="20" viewBox="0 0 20 20"><circle cx="8" cy="8" r="7" fill="none" stroke="#757575" stroke-width="1.200" /><path d="M13 13L18.500 18.500" stroke="#858585" stroke-width="2.200" stroke-linecap="round" /></svg>
        </button>
        <button class="tool menu" aria-label="菜单">
          <svg width="18" height="18" viewBox="0 0 18 18"><circle cx="9" cy="9" r="8.500" fill="none" stroke="#6c6c6c" /><path d="M4 8H6.500V10H4ZM7.800 8H10.200V10H7.800ZM11.500 8H14V10H11.500Z" fill="#747474" /></svg>
        </button>
        <button class="tool" aria-label="最小化">
          <svg width="12" height="12" viewBox="0 0 12 12"><path d="M1 7.500H12" stroke="#6c6c6c" /></svg>
        </button>
        <button class="tool" aria-label="还原">
          <svg width="12" height="12" viewBox="0 0 12 12"><path d="M.5 4.500H8.500V12H.5ZM2 2.500H11.500V10" fill="none" stroke="#6c6c6c" /></svg>
        </button>
        <button class="tool exit" aria-label="关闭">
          <svg width="11" height="11" viewBox="0 0 11 11"><path d="M0 0L11 11M11 0L0 11" stroke="#6c6c6c" /></svg>
        </button>
      </header>
      <div class="body">
        <fm-sidebar></fm-sidebar>
        <main class="main">
          <h2 class="heading">我的目录</h2>
          <div class="folders">${folders.map(([label, emblem]) => html`<fm-folder .label=${label} .emblem=${emblem}></fm-folder>`)}</div>
          <h2 class="heading">磁盘列表</h2>
          <div class="disks">${disks.map((d) => html`<fm-disk .disk=${d}></fm-disk>`)}</div>
        </main>
      </div>
      <desk-taskbar></desk-taskbar>
      <fm-error-dialog class="dialog"></fm-error-dialog>
    `;
  }
}
